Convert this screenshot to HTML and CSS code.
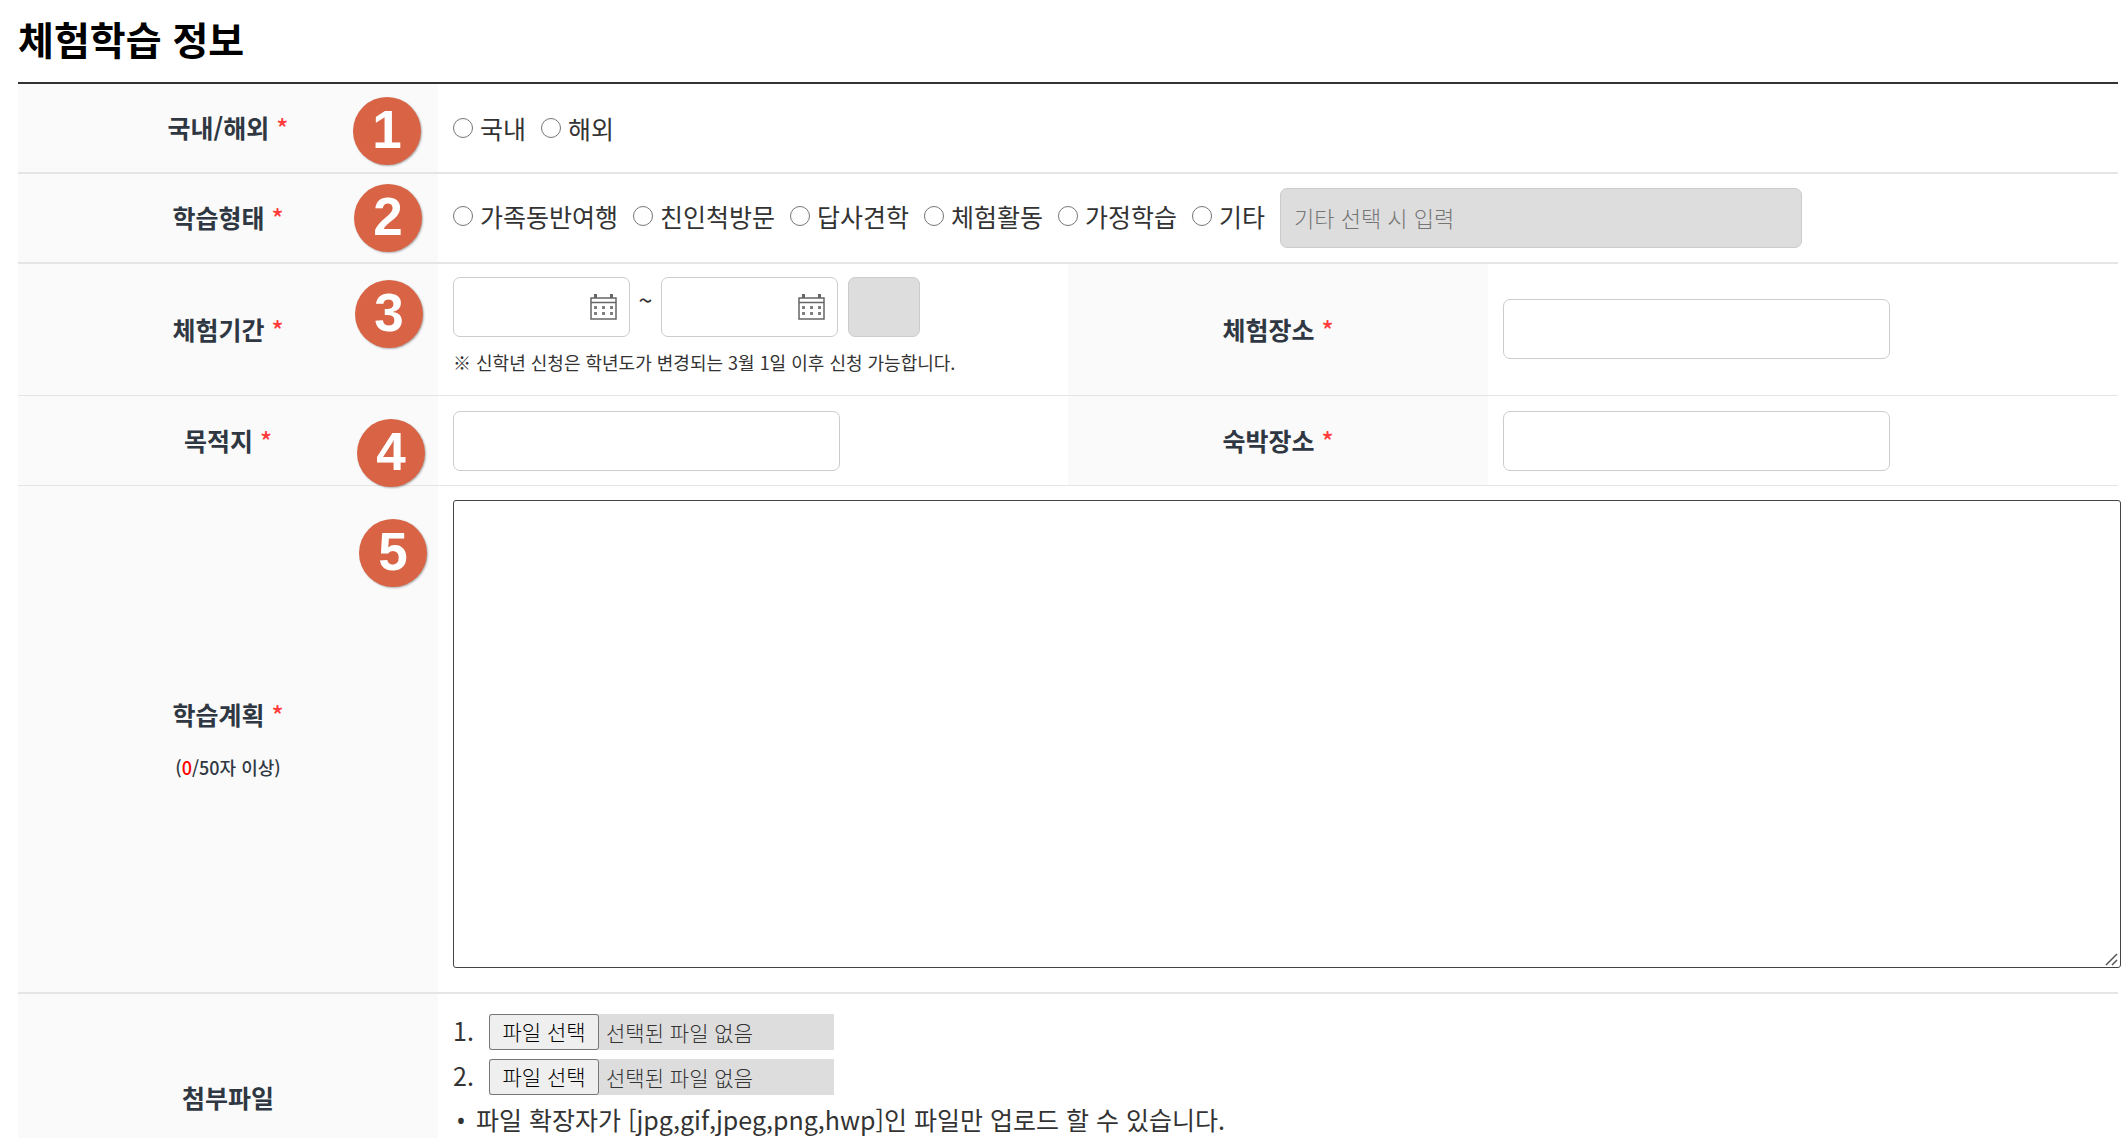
FILE: index.html
```
<!DOCTYPE html>
<html lang="ko">
<head>
	<meta charset="UTF-8">
	<title>체험학습 정보</title>
	<link rel="stylesheet" href="styles.css">
</head>
<body>
	<h1>체험학습 정보</h1>
	<form>
		<table class="info-table">
			<colgroup>
				<col class="col-label">
				<col class="col-data">
				<col class="col-label">
				<col class="col-data">
			</colgroup>
			<tbody>
				<tr class="row-area">
					<th scope="row">국내/해외 <span class="required">*</span><span class="badge badge-1">1</span></th>
					<td colspan="3">
						<div class="options">
							<label><input type="radio" name="area" value="in">국내</label>
							<label><input type="radio" name="area" value="out">해외</label>
						</div>
					</td>
				</tr>
				<tr class="row-type">
					<th scope="row">학습형태 <span class="required">*</span><span class="badge badge-2">2</span></th>
					<td colspan="3">
						<div class="options">
							<label><input type="radio" name="type" value="1">가족동반여행</label>
							<label><input type="radio" name="type" value="2">친인척방문</label>
							<label><input type="radio" name="type" value="3">답사견학</label>
							<label><input type="radio" name="type" value="4">체험활동</label>
							<label><input type="radio" name="type" value="5">가정학습</label>
							<label><input type="radio" name="type" value="6">기타</label>
							<input type="text" class="text etc" aria-label="기타" placeholder="기타 선택 시 입력" disabled>
						</div>
					</td>
				</tr>
				<tr class="row-period">
					<th scope="row"><label for="start-date">체험기간</label> <span class="required">*</span><span class="badge badge-3">3</span></th>
					<td>
						<div class="period">
							<span class="date">
								<input type="text" class="text" id="start-date">
								<button type="button" aria-label="시작일 선택">
									<svg width="27" height="26" viewBox="0 0 27 26">
										<path d="M1 4H26V25H1ZM1 8.500H26" fill="none" stroke="#666" stroke-width="1.500"/>
										<path d="M4 0H7V4H4ZM20 0H23V4H20Z" fill="#666"/>
										<path d="M4 12H7V15H4ZM12 12H15V15H12ZM20 12H23V15H20ZM4 18H7V21H4ZM12 18H15V21H12ZM20 18H23V21H20Z" fill="#808080"/>
									</svg>
								</button>
							</span>
							<span class="tilde">~</span>
							<span class="date">
								<input type="text" class="text" id="end-date" aria-label="종료일">
								<button type="button" aria-label="종료일 선택">
									<svg width="27" height="26" viewBox="0 0 27 26">
										<path d="M1 4H26V25H1ZM1 8.500H26" fill="none" stroke="#666" stroke-width="1.500"/>
										<path d="M4 0H7V4H4ZM20 0H23V4H20Z" fill="#666"/>
										<path d="M4 12H7V15H4ZM12 12H15V15H12ZM20 12H23V15H20ZM4 18H7V21H4ZM12 18H15V21H12ZM20 18H23V21H20Z" fill="#808080"/>
									</svg>
								</button>
							</span>
							<input type="text" class="text days" aria-label="일수" disabled>
						</div>
						<p class="note">※ 신학년 신청은 학년도가 변경되는 3월 1일 이후 신청 가능합니다.</p>
					</td>
					<th scope="row"><label for="place">체험장소</label> <span class="required">*</span></th>
					<td><input type="text" class="text" id="place"></td>
				</tr>
				<tr class="row-dest">
					<th scope="row"><label for="dest">목적지</label> <span class="required">*</span><span class="badge badge-4">4</span></th>
					<td><input type="text" class="text" id="dest"></td>
					<th scope="row"><label for="stay">숙박장소</label> <span class="required">*</span></th>
					<td><input type="text" class="text" id="stay"></td>
				</tr>
				<tr class="row-plan">
					<th scope="row">
						<label for="plan">학습계획</label> <span class="required">*</span>
						<p class="count">(<span>0</span>/50자 이상)</p>
						<span class="badge badge-5">5</span>
					</th>
					<td colspan="3"><textarea id="plan"></textarea></td>
				</tr>
				<tr class="row-file">
					<th scope="row">첨부파일</th>
					<td colspan="3">
						<div class="file-row">
							<span class="num">1.</span>
							<label class="file"><input type="file"><span class="file-button">파일 선택</span><span>선택된 파일 없음</span></label>
						</div>
						<div class="file-row">
							<span class="num">2.</span>
							<label class="file"><input type="file"><span class="file-button">파일 선택</span><span>선택된 파일 없음</span></label>
						</div>
						<ul>
							<li>파일 확장자가 [jpg,gif,jpeg,png,hwp]인 파일만 업로드 할 수 있습니다.</li>
						</ul>
					</td>
				</tr>
			</tbody>
		</table>
	</form>
</body>
</html>
```
FILE: styles.css
```
* {
	box-sizing: border-box;
}
body {
	margin: 0;
	padding: 9px 4px 0 18px;
	background-color: #fff;
	color: #333;
	font-family: "Noto Sans CJK KR", "Noto Sans", sans-serif;
	font-size: 25px;
	line-height: 36px;
}
h1 {
	margin: 0 0 15px;
	color: #000;
	font-size: 39px;
	line-height: 58px;
}
.info-table {
	width: 100%;
	table-layout: fixed;
	border-collapse: separate;
	border-spacing: 0;
	border-top: 2px solid #333;
}
.col-label {
	width: 20%;
}
.col-data {
	width: 30%;
}
th, td {
	padding: 0 15px;
	border-bottom: 2px solid #e5e5e5;
	vertical-align: middle;
}
th {
	position: relative;
	padding-bottom: 2px;
	background-color: #fafafa;
	color: #2f3842;
	font-weight: 700;
	text-align: center;
}
.required {
	color: #ff3b3b;
	font-weight: 500;
}
.row-area, .row-type {
	height: 90px;
}
.row-period {
	height: 132px;
}
.row-dest {
	height: 90px;
}
.row-period th, .row-period td, .row-dest th, .row-dest td {
	border-bottom-width: 1px;
}
/* 번호 */
.badge {
	position: absolute;
	z-index: 1;
	width: 68px;
	height: 68px;
	border-radius: 50%;
	background-color: #d86345;
	box-shadow: 1px 1px 2px rgba(0, 0, 0, 0.3);
	color: #fff;
	font-family: "Liberation Sans", Arial, sans-serif;
	font-size: 53px;
	font-weight: bold;
	line-height: 66px;
	text-align: center;
}
.badge-1 {
	top: 13px;
	right: 17px;
}
.badge-2 {
	top: 10px;
	right: 16px;
}
.badge-3 {
	top: 16px;
	right: 15px;
}
.badge-4 {
	top: 23px;
	right: 13px;
}
.badge-5 {
	top: 33px;
	right: 11px;
}
/* 입력 */
.options {
	display: flex;
	align-items: center;
	gap: 15px;
}
.options label {
	display: flex;
	align-items: center;
	gap: 7px;
}
.row-type .options label {
	padding-bottom: 5px;
}
input[type="radio"] {
	width: 20px;
	height: 20px;
	margin: 0;
}
.text {
	display: block;
	width: 387px;
	height: 60px;
	padding: 0 13px 2px;
	border: 1px solid #ccc;
	border-radius: 7px;
	background-color: #fff;
	font-family: inherit;
	font-size: 22px;
	font-weight: 300;
}
.text:disabled {
	background-color: #ddd;
}
.text::placeholder {
	color: #757575;
}
.text.etc {
	width: 522px;
}
.row-period td {
	padding-bottom: 1px;
}
.period {
	display: flex;
	align-items: center;
}
.date {
	position: relative;
}
.date .text {
	width: 177px;
	padding-right: 50px;
}
.date button {
	position: absolute;
	top: 17px;
	right: 13px;
	width: 27px;
	height: 26px;
	padding: 0;
	border: 0;
	background: none;
}
.date svg {
	display: block;
}
.tilde {
	width: 31px;
	padding-bottom: 16px;
	text-align: center;
}
.text.days {
	width: 72px;
	margin-left: 10px;
}
.note {
	margin: 12px 0 6px;
	font-size: 18px;
	line-height: 26px;
}
.count {
	margin: 22px 0 0;
	font-size: 18px;
	font-weight: 500;
	line-height: 26px;
}
.count span {
	color: #f00;
}
.row-plan td {
	padding: 14px 0 24px 15px;
}
textarea {
	display: block;
	width: calc(100% + 3px);
	height: 468px;
	border: 1px solid #444;
	border-radius: 3px;
	font-family: inherit;
	font-size: 22px;
}
textarea::-webkit-resizer {
	background: url("data:image/svg+xml,%3Csvg xmlns='http://www.w3.org/2000/svg' width='15' height='15'%3E%3Cpath d='M1 13L12 2M7 13L12 8' stroke='%23555' stroke-width='1.5'/%3E%3C/svg%3E") no-repeat;
}
/* 첨부파일 */
.row-file th, .row-file td {
	border-bottom: 0;
}
.row-file th {
	padding-top: 64px;
}
.row-file td {
	padding-top: 15px;
}
.file-row {
	display: flex;
	align-items: center;
	height: 45px;
}
.num {
	width: 36px;
	padding-bottom: 4px;
}
.file {
	display: flex;
	align-items: center;
	gap: 7px;
	width: 345px;
	height: 36px;
	background-color: #ddd;
	font-size: 21px;
	font-weight: 300;
}
.file input {
	position: absolute;
	width: 1px;
	height: 1px;
	opacity: 0;
}
.file-button {
	width: 110px;
	height: 36px;
	border: 1px solid #767676;
	border-radius: 3px;
	background-color: #efefef;
	color: #000;
	line-height: 32px;
	text-align: center;
}
ul {
	margin: 2px 0 0;
	padding: 0;
	list-style: none;
}
li::before {
	content: "•";
	display: inline-block;
	width: 16px;
	margin-right: 7px;
	font-family: "Noto Sans", sans-serif;
	text-align: center;
}
```
